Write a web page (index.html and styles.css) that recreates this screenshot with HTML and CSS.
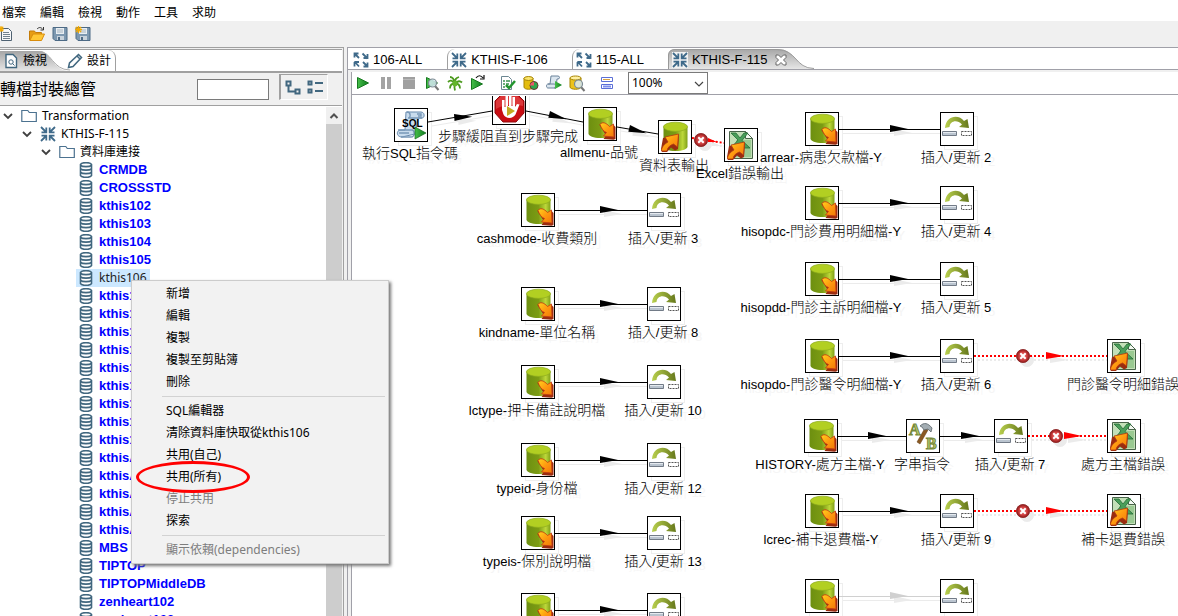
FILE: index.html
```html
<!DOCTYPE html>
<html lang="zh-Hant">
<head>
<meta charset="utf-8">
<title>KTHIS-F-115</title>
<link rel="stylesheet" href="styles.css">
</head>
<body>
<svg class="defs" aria-hidden="true">
  <defs>
    <linearGradient id="g-cyl" x1="0" x2="1" y1="0" y2="0"><stop offset="0" stop-color="#6d8f10"/><stop offset=".5" stop-color="#7c9c14"/><stop offset=".8" stop-color="#bdd83a"/><stop offset="1" stop-color="#7f9f18"/></linearGradient>
    <linearGradient id="g-arrow" x1="0" x2="1" y1="0" y2="1"><stop offset="0" stop-color="#ffd21c"/><stop offset=".5" stop-color="#ff9a10"/><stop offset="1" stop-color="#f07808"/></linearGradient>
    <linearGradient id="g-arc" x1="0" x2="1"><stop offset="0" stop-color="#b9d04e"/><stop offset="1" stop-color="#66781c"/></linearGradient>
    <linearGradient id="g-tab" x1="0" x2="0" y1="0" y2="1"><stop offset="0" stop-color="#a6a6a6"/><stop offset="1" stop-color="#e6e6e6"/></linearGradient>
    <linearGradient id="g-play" x1="0" x2="1"><stop offset="0" stop-color="#47c04a"/><stop offset="1" stop-color="#0d7a1c"/></linearGradient>
    <radialGradient id="g-err"><stop offset="0" stop-color="#e88"/><stop offset=".6" stop-color="#cf3d3d"/><stop offset="1" stop-color="#8c1c1c"/></radialGradient>
    <symbol id="cyl" viewBox="0 0 32 32"><path d="M4.500 5.500v20c0 2.500 5 4.500 12 4.500s12-2 12-4.500v-20z" fill="url(#g-cyl)"/><ellipse cx="16.500" cy="5.800" rx="12" ry="4.600" fill="#b2cf22" stroke="#8caa1c" stroke-width=".7"/></symbol>
    <symbol id="n-dbout" viewBox="0 0 32 32"><use href="#cyl" width="32" height="32"/><path d="M15.500 17c3-4 6-2 10 2l4-2 2 2v12l-2 .8-10-.8 2.500-3.500z" fill="#9a2c10"/><path d="M16 16.500c2-3 6-2 9.500 2l4-2.500.5 13-10.500-1 3-3.500c-3-1-5-4-6.500-8z" fill="url(#g-arrow)" stroke="#c33a10" stroke-width=".8"/></symbol>
    <symbol id="a-up" viewBox="0 0 32 32"><path d="M4 17l16-3-1 14-3 1.500-4-3L8 31H3l-1-3z" fill="#9a2c10"/><path d="M6 16l13.500-3-1 13-4-3c-3 1-6 3-6.500 7H2.500c0-4 3-7 6.500-9z" fill="url(#g-arrow)" stroke="#b23a10" stroke-width=".8"/></symbol>
    <symbol id="n-dbin" viewBox="0 0 32 32"><use href="#cyl" width="32" height="32"/><use href="#a-up" width="32" height="32"/></symbol>
    <symbol id="n-excel" viewBox="0 0 32 32"><path d="M4.500 2.500h16l7 7v20h-23z" fill="#c3e0b8" stroke="#49644a"/><path d="M11 11h15v17H11z" fill="#9aca92"/><path d="M20.500 2.500v7h7z" fill="#f4faf2" stroke="#49644a"/><path d="M6 4h5l4 5 4-5h4l-6 7.500 8 7.500h-6l-4-4-4 4H6l7-8z" fill="#4a9f5a" stroke="#246c36" stroke-width=".8"/><use href="#a-up" width="32" height="32"/></symbol>
    <symbol id="n-update" viewBox="0 0 32 32"><path d="M4 15C5 2 18 1 23 8l3.500-2L28 15l-10-1 3-2.500C16 6 9 8 8.500 14z" fill="url(#g-arc)"/><path d="M1.500 18.500h14v4h-14z" fill="#bac4cf" stroke="#727b87"/><path d="M2 19.500h13" stroke="#e5eaf0"/><path d="M20.500 18.500h10v4h-10z" fill="none" stroke="#555" stroke-dasharray="2 1"/></symbol>
    <symbol id="n-sql" viewBox="0 0 32 32"><path d="M11 3h15c4 0 4 6 1 6h-4l-3 16-13 3C1 28 1 21 6 21h4z" fill="#c9dced" stroke="#6789ad"/><path d="M12 3c4 0 4 6 1 6h14M3 21h14c3 0 3 7-1 7H6M22 5h4v2h-3M4 24h10" fill="none" stroke="#7898b8" stroke-width="1.400"/><text x="7" y="18" class="sql-mark">SQL</text><path d="M20 18l11 6-11 6z" fill="url(#g-play)" stroke="#176a21" stroke-width=".7"/></symbol>
    <symbol id="n-block" viewBox="0 0 32 32"><path d="M10 1h13l8 8v12l-8 9H10l-8-9V9z" fill="#c90d13" stroke="#8e0a0e"/><path d="M10 2h12l8 7v5c-8-2-18-2-27 3V9z" fill="#ea5454" opacity=".6"/><path d="M9 18V8h2.500v7h1V4H15v10h1V3h2.500v11h1V5H22v10l2-3 2.500.5-4 10c-3 5-10 4-12 0z" fill="#fff"/><path d="M14 14l8 5-8 5z" fill="#c4aa20"/></symbol>
    <symbol id="n-string" viewBox="0 0 32 32"><text x="2" y="15" class="letter-mark">A</text><text x="19" y="29" class="letter-mark">B</text><path d="M18 8l3 2-8 14-3-2z" fill="#8b5a22" stroke="#5f3a12" stroke-width=".5"/><path d="M13 6c4-4 8-3 12 2l-1 4-3-3-4 1-2-3z" fill="#a3adb3" stroke="#5a656b" stroke-width=".8"/></symbol>
    <symbol id="head" viewBox="0 0 18 8" overflow="visible"><path d="M0 0l18 4L0 7z" fill="currentColor"/></symbol>
    <symbol id="err" viewBox="0 0 14 14"><circle cx="7" cy="7" r="6.600" fill="url(#g-err)" stroke="#8a2020" stroke-width=".8"/><path d="M4.300 4.300l5.400 5.400m0-5.400L4.300 9.700" stroke="#fff" stroke-width="2"/></symbol>
    <symbol id="i-in" viewBox="0 0 16 16"><path d="M1 1l4.500 4.500M15 1l-4.500 4.500M1 15l4.500-4.500M15 15l-4.500-4.500M6.300 1.500v4.800H1.500M9.700 1.500v4.800h4.800M6.300 14.500V9.700H1.500M9.700 14.500V9.700h4.800" fill="none" stroke="#3f6a8a" stroke-width="1.800"/></symbol>
    <symbol id="i-out" viewBox="0 0 16 16"><path d="M1.500 1.500L6 6M14.500 6.500L9.500 1.500M1.500 9.500l4.500 5M14.500 14.500L10 10M1.500 5.500v-4h4M10.500 6h4V2M1.500 14.500v-4.500M6 10H1.500M14.500 10.500v4h-4" fill="none" stroke="#3f6a8a" stroke-width="1.800"/></symbol>
    <symbol id="i-folder" viewBox="0 0 16 16"><path d="M.8 13.500v-11h6l1.500 2h7v9z" fill="#fff" stroke="#4c7290" stroke-width="1.200"/></symbol>
    <symbol id="i-db" viewBox="0 0 16 16"><path d="M2.500 2.500C4 0 12 0 13.500 2.500v11c-1.500 2.500-9.500 2.500-11 0z" fill="#fff" stroke="#41677f" stroke-width="1.600"/><path d="M2.500 3.500c2 1.500 9 1.500 11 0M2.500 7c2 1.500 9 1.500 11 0M2.500 10.500c2 1.500 9 1.500 11 0" fill="none" stroke="#41677f" stroke-width="1.600"/></symbol>
    <symbol id="i-down" viewBox="0 0 16 16"><path d="M4 6l4 4 4-4" fill="none" stroke="#404040" stroke-width="1.800"/></symbol>
    <symbol id="i-play" viewBox="0 0 16 16"><path d="M2.500 2.500l11 5.500-11 5.500z" fill="url(#g-play)" stroke="#16791f"/></symbol>
    <symbol id="i-lens" viewBox="0 0 16 16"><path d="M11 11l3.500 4" stroke="#777" stroke-width="2"/><circle cx="8.500" cy="8" r="4" fill="#d8ebf4" fill-opacity=".85" stroke="#7d8b92" stroke-width="1.200"/></symbol>
    <symbol id="i-save" viewBox="0 0 16 16"><path d="M1 1.500h14v13H3l-2-2z" fill="#7d98b0" stroke="#4d6a85"/><path d="M4 2h8v6H4z" fill="#e9eef2"/><path d="M5 4h6M5 6h6" stroke="#a6b4c0"/><path d="M5 10h7v4H5z" fill="#c9d3dc"/><path d="M6 11h2v3H6z" fill="#4d6a85"/></symbol>
    <symbol id="i-star" viewBox="0 0 8 8"><path d="M4 0v8M0 4h8M1 1l6 6M7 1L1 7" stroke="#f2a900" stroke-width="1.500"/></symbol>
  </defs>
</svg>

<nav class="menubar" aria-label="主選單">
  <button>檔案</button><button>編輯</button><button>檢視</button><button>動作</button><button>工具</button><button>求助</button>
</nav>
<div class="filebar">
  <button aria-label="新增"><svg class="ico"><path d="M3.500 2.500h7l3 3v9h-10z" fill="#f6f8fa" stroke="#4f6272"/><path d="M5 6.500h6M5 8.500h7M5 10.500h7M5 12.500h7" stroke="#71818e"/><use href="#i-star" width="6" height="6"/></svg></button>
  <button class="open" aria-label="開啟"><svg class="ico"><path d="M.5 14V5h5l1 1.500h6V9" fill="#e79d13" stroke="#c47c08"/><path d="M.8 14.500L4 8h11.500l-3 6.500z" fill="#ffc734" stroke="#d98c0c"/><path d="M8 3c2-2 4-2 6 .5M14.500 1v3h-3" fill="none" stroke="#333"/></svg></button>
  <button aria-label="儲存"><svg class="ico"><use href="#i-save" width="16" height="16"/></svg></button>
  <button aria-label="另存"><svg class="ico"><use href="#i-save" width="16" height="16"/><use href="#i-star" width="7" height="7"/></svg></button>
</div>

<main class="work">
  <section class="side">
    <div class="side-tabs">
      <button class="side-tab side-tab-on"><svg class="side-shape" viewBox="0 0 72 20" preserveAspectRatio="none"><path d="M0 0h38c14 0 14 20 32 20H0z" fill="url(#g-tab)"/><path d="M38 0c14 0 14 19 32 19" fill="none" stroke="#aaa"/></svg><svg class="ico"><path d="M3 1.500h7l3.500 3.500v9.500H3z" fill="#fff" stroke="#41677f" stroke-width="1.400"/><circle cx="8" cy="9" r="2.200" fill="none" stroke="#41677f"/><path d="M9.500 10.500l2 2" stroke="#41677f"/></svg><span>檢視</span></button>
      <button class="side-tab side-tab-design"><svg class="ico"><path d="M1.500 14.500l1-4.500 9-8.500 3 3-8.500 9z M10 3l3 3" fill="#fff" stroke="#41677f" stroke-width="1.500"/></svg><span>設計</span></button>
    </div>
    <div class="side-head">
      <label for="find">轉檔封裝總管</label>
      <input id="find" type="text">
      <div class="toggles">
        <button aria-label="展開"><svg class="ico"><path d="M1.500 1.500h4v4h-4zM10.500 9.500h4v4h-4zM3.500 6v5.500H10" fill="none" stroke="#41677f" stroke-width="2"/></svg></button>
        <button aria-label="摺疊"><svg class="ico"><path d="M1.500 1.500h3v3h-3zM1.500 9.500h3v3h-3zM8 3h8M8 11h8" fill="none" stroke="#41677f" stroke-width="2"/></svg></button>
      </div>
    </div>
    <div class="tree-box">
      <ul class="tree">
        <li><svg class="twist"><use href="#i-down"/></svg><svg class="ico"><use href="#i-folder"/></svg><span>Transformation</span></li>
        <li class="l1"><svg class="twist"><use href="#i-down"/></svg><svg class="ico"><use href="#i-in"/></svg><span>KTHIS-F-115</span></li>
        <li class="l2"><svg class="twist"><use href="#i-down"/></svg><svg class="ico"><use href="#i-folder"/></svg><span>資料庫連接</span></li>
        <li class="db"><svg class="ico"><use href="#i-db"/></svg><span>CRMDB</span></li>
        <li class="db"><svg class="ico"><use href="#i-db"/></svg><span>CROSSSTD</span></li>
        <li class="db"><svg class="ico"><use href="#i-db"/></svg><span>kthis102</span></li>
        <li class="db"><svg class="ico"><use href="#i-db"/></svg><span>kthis103</span></li>
        <li class="db"><svg class="ico"><use href="#i-db"/></svg><span>kthis104</span></li>
        <li class="db"><svg class="ico"><use href="#i-db"/></svg><span>kthis105</span></li>
        <li class="db sel"><svg class="ico"><use href="#i-db"/></svg><span>kthis106</span></li>
        <li class="db"><svg class="ico"><use href="#i-db"/></svg><span>kthis1</span></li>
        <li class="db"><svg class="ico"><use href="#i-db"/></svg><span>kthis1</span></li>
        <li class="db"><svg class="ico"><use href="#i-db"/></svg><span>kthis1</span></li>
        <li class="db"><svg class="ico"><use href="#i-db"/></svg><span>kthis1</span></li>
        <li class="db"><svg class="ico"><use href="#i-db"/></svg><span>kthis1</span></li>
        <li class="db"><svg class="ico"><use href="#i-db"/></svg><span>kthis1</span></li>
        <li class="db"><svg class="ico"><use href="#i-db"/></svg><span>kthis1</span></li>
        <li class="db"><svg class="ico"><use href="#i-db"/></svg><span>kthis1</span></li>
        <li class="db"><svg class="ico"><use href="#i-db"/></svg><span>kthis1</span></li>
        <li class="db"><svg class="ico"><use href="#i-db"/></svg><span>kthisA</span></li>
        <li class="db"><svg class="ico"><use href="#i-db"/></svg><span>kthisA</span></li>
        <li class="db"><svg class="ico"><use href="#i-db"/></svg><span>kthisA</span></li>
        <li class="db"><svg class="ico"><use href="#i-db"/></svg><span>kthisA</span></li>
        <li class="db"><svg class="ico"><use href="#i-db"/></svg><span>kthisA</span></li>
        <li class="db"><svg class="ico"><use href="#i-db"/></svg><span>MBS</span></li>
        <li class="db"><svg class="ico"><use href="#i-db"/></svg><span>TIPTOP</span></li>
        <li class="db"><svg class="ico"><use href="#i-db"/></svg><span>TIPTOPMiddleDB</span></li>
        <li class="db"><svg class="ico"><use href="#i-db"/></svg><span>zenheart102</span></li>
        <li class="db"><svg class="ico"><use href="#i-db"/></svg><span>zenheart103</span></li>
      </ul>
      <div class="scroll"><button aria-label="向上捲動"><svg class="ico"><path d="M4.500 10L8 6.500l3.500 3.500" fill="none" stroke="#505050" stroke-width="2"/></svg></button><div class="thumb"></div></div>
    </div>
  </section>

  <section class="editor">
    <div class="tabs">
      <button class="tab"><svg class="ico"><use href="#i-out"/></svg><span>106-ALL</span></button>
      <button class="tab tab-edge"><svg class="ico"><use href="#i-in"/></svg><span>KTHIS-F-106</span></button>
      <button class="tab tab-edge"><svg class="ico"><use href="#i-out"/></svg><span>115-ALL</span></button>
      <button class="tab tab-on"><svg class="tab-shape" viewBox="0 0 146 20" preserveAspectRatio="none"><path d="M0 20V6Q1 0 7 0h102c20 0 18 20 37 20z" fill="url(#g-tab)"/><path d="M.5 20V6Q1 .5 7 .5h102c20 0 18 19 37 19" fill="none" stroke="#999"/></svg><svg class="ico"><path d="M0 0h16v16H0z" fill="#f2f2f2"/><use href="#i-in"/></svg><span>KTHIS-F-115</span><svg class="close" viewBox="0 0 12 12"><path d="M1 1h2.500L6 3.500 8.500 1H11v2.500L8.500 6 11 8.500V11H8.500L6 8.500 3.500 11H1V8.500L3.500 6 1 3.500z" fill="#fff" stroke="#666"/></svg></button>
    </div>
    <div class="pane">
      <div class="runbar">
        <button aria-label="執行"><svg class="ico"><use href="#i-play"/></svg></button>
        <button aria-label="暫停"><svg class="ico"><path d="M3 2h4v12H3zM9 2h4v12H9z" fill="#a3a3a3"/></svg></button>
        <button aria-label="停止"><svg class="ico"><path d="M2 2h12v12H2z" fill="#a0a0a0"/><path d="M2 4.500h12" stroke="#b8b8b8"/></svg></button>
        <button aria-label="預覽"><svg class="ico"><use href="#i-play"/><use href="#i-lens"/></svg></button>
        <button aria-label="除錯"><svg class="ico"><path d="M8 8.500C5 5 3 5 1 7M8 8.500c-4 0-5 2-5 5M8 8.500c-1 3-1 4 0 7M8 8.500c3 0 5 2 5 5M8 8.500c3-3 5-3 7-1M8 8C7 4 5 2 3 2M8 8c0-4 1-5 4-6" fill="none" stroke="#4c9a1e" stroke-width="1.800"/><ellipse cx="8" cy="8.500" rx="2.500" ry="3" fill="#63b52b"/></svg></button>
        <button aria-label="重播"><svg class="ico"><path d="M1.500 3.500l11 5.500-11 5.500z" fill="url(#g-play)" stroke="#16791f"/><path d="M6 3c2-3 5-3 7 0M14 0v4h-4" fill="none" stroke="#111" stroke-width="1.200"/></svg></button>
        <i class="space"></i>
        <button aria-label="檢驗"><svg class="ico"><path d="M1.500 1.500h7l3 3v10h-10z" fill="#fff" stroke="#6c8792"/><path d="M3 6h2M6 6h4M3 9h2M6 9h3M3 12h2" stroke="#3c9150" stroke-width="1.500"/><path d="M6 10l3 3 6-7" fill="none" stroke="#23952f" stroke-width="2.500"/></svg></button>
        <button aria-label="影響分析"><svg class="ico"><path d="M1 3v9c0 3 9 3 9 0V3z" fill="#e4bd10" stroke="#a78400"/><ellipse cx="5.500" cy="3.500" rx="4.500" ry="2" fill="#fbe56b" stroke="#a78400"/><circle cx="11" cy="10.500" r="4" fill="#2fa84a" stroke="#6b3030"/><path d="M11 10.500V7a4 4 0 0 0-4 3.500z" fill="#e56"/></svg></button>
        <button aria-label="SQL"><svg class="ico"><path d="M5 1h7c2 0 2 3 0 3h-1l-1 9H2c-2 0-2-4 0-4h2z" fill="#dbe6ef" stroke="#6a829a"/><path d="M2 9h6c2 0 2 4 0 4" fill="none" stroke="#6a829a"/><path d="M9 6l7 4-7 4z" fill="url(#g-play)"/></svg></button>
        <button aria-label="探索資料庫"><svg class="ico"><path d="M1 3v9c0 3 11 3 11 0V3z" fill="#edc31b" stroke="#a78400"/><ellipse cx="6.500" cy="3" rx="5.500" ry="2" fill="#fff0a0" stroke="#a78400"/><use href="#i-lens" x="1" y="1"/></svg></button>
        <i class="space"></i>
        <button aria-label="顯示結果"><svg class="ico"><path d="M2.500 2.500h11v4h-11zM2.500 9.500h11v4h-11z" fill="#fff" stroke="#5b6fd6"/><path d="M4 4.500h7" stroke="#d8a040"/><path d="M4 11.500h8" stroke="#7f90ee" stroke-width="2"/></svg></button>
        <span class="zoom"><select aria-label="縮放"><option>100%</option></select><svg viewBox="0 0 16 16"><path d="M4 6l4 4 4-4" fill="none" stroke="#444" stroke-width="1.200"/></svg></span>
      </div>
      <div class="canvas">
        <svg class="links">
          <g class="hop">
            <path d="M76 26L140 15M174 15L231 26M265 31L306 38"/>
            <path d="M203 114.500h92M203 208.500h92M203 286.500h92M203 364.500h92M203 437.500h92M203 514.500h92"/>
            <path d="M487 33.500h101M487 107.500h101M487 183.500h101M487 260.500h101M486 340.500h68M588 340.500h54M487 415.500h101"/>
            <g transform="translate(102 18) rotate(-4)"><use href="#head" width="18" height="8"/></g>
            <g transform="translate(198 15) rotate(14)"><use href="#head" width="18" height="8"/></g>
            <g transform="translate(278 29) rotate(14)"><use href="#head" width="18" height="8"/></g>
            <use href="#head" x="248" y="110" width="18" height="8"/><use href="#head" x="248" y="204" width="18" height="8"/><use href="#head" x="248" y="282" width="18" height="8"/><use href="#head" x="248" y="360" width="18" height="8"/><use href="#head" x="248" y="433" width="18" height="8"/><use href="#head" x="248" y="510" width="18" height="8"/>
            <use href="#head" x="538" y="29" width="18" height="8"/><use href="#head" x="538" y="103" width="18" height="8"/><use href="#head" x="538" y="179" width="18" height="8"/><use href="#head" x="538" y="256" width="18" height="8"/><use href="#head" x="516" y="336" width="18" height="8"/><use href="#head" x="609" y="336" width="18" height="8"/><use href="#head" x="538" y="411" width="18" height="8"/>
          </g>
          <g class="hop hop-off"><path d="M487 500.500h101"/><use href="#head" x="538" y="496" width="18" height="8"/></g>
          <g class="hop hop-err">
            <path d="M340 42L372 47M622 260h133M676 340h79M622 415h133"/>
            <path class="tip" d="M356 42l9 4-9 0z"/>
            <use href="#head" x="694" y="256" width="18" height="8"/><use href="#head" x="712" y="336" width="18" height="8"/><use href="#head" x="694" y="411" width="18" height="8"/>
            <use href="#err" x="342" y="37" width="14" height="14"/><use href="#err" x="664" y="253" width="14" height="14"/><use href="#err" x="697" y="333" width="14" height="14"/><use href="#err" x="664" y="408" width="14" height="14"/>
          </g>
        </svg>
        <div class="node" style="left:42px;top:12px"><svg><use href="#n-sql"/></svg><p>執行<b>SQL</b>指令碼</p></div>
        <div class="node" style="left:140px;top:-5px"><svg><use href="#n-block"/></svg><p>步驟緩阻直到步驟完成</p></div>
        <div class="node" style="left:231px;top:11px"><svg><use href="#n-dbout"/></svg><p><b>allmenu-</b>品號</p></div>
        <div class="node" style="left:306px;top:24px"><svg><use href="#n-dbin"/></svg><p>資料表輸出</p></div>
        <div class="node" style="left:372px;top:32px"><svg><use href="#n-excel"/></svg><p><b>Excel</b>錯誤輸出</p></div>
        <div class="node" style="left:453px;top:16px"><svg><use href="#n-dbout"/></svg><p><b>arrear-</b>病患欠款檔<b>-Y</b></p></div>
        <div class="node" style="left:588px;top:16px"><svg><use href="#n-update"/></svg><p>插入<b>/</b>更新<b> 2</b></p></div>
        <div class="node" style="left:453px;top:90px"><svg><use href="#n-dbout"/></svg><p><b>hisopdc-</b>門診費用明細檔<b>-Y</b></p></div>
        <div class="node" style="left:588px;top:90px"><svg><use href="#n-update"/></svg><p>插入<b>/</b>更新<b> 4</b></p></div>
        <div class="node" style="left:453px;top:166px"><svg><use href="#n-dbout"/></svg><p><b>hisopdd-</b>門診主訴明細檔<b>-Y</b></p></div>
        <div class="node" style="left:588px;top:166px"><svg><use href="#n-update"/></svg><p>插入<b>/</b>更新<b> 5</b></p></div>
        <div class="node" style="left:453px;top:243px"><svg><use href="#n-dbout"/></svg><p><b>hisopdo-</b>門診醫令明細檔<b>-Y</b></p></div>
        <div class="node" style="left:588px;top:243px"><svg><use href="#n-update"/></svg><p>插入<b>/</b>更新<b> 6</b></p></div>
        <div class="node" style="left:755px;top:243px"><svg><use href="#n-excel"/></svg><p>門診醫令明細錯誤</p></div>
        <div class="node" style="left:452px;top:323px"><svg><use href="#n-dbout"/></svg><p><b>HISTORY-</b>處方主檔<b>-Y</b></p></div>
        <div class="node" style="left:554px;top:323px"><svg><use href="#n-string"/></svg><p>字串指令</p></div>
        <div class="node" style="left:642px;top:323px"><svg><use href="#n-update"/></svg><p>插入<b>/</b>更新<b> 7</b></p></div>
        <div class="node" style="left:755px;top:323px"><svg><use href="#n-excel"/></svg><p>處方主檔錯誤</p></div>
        <div class="node" style="left:453px;top:398px"><svg><use href="#n-dbout"/></svg><p><b>lcrec-</b>補卡退費檔<b>-Y</b></p></div>
        <div class="node" style="left:588px;top:398px"><svg><use href="#n-update"/></svg><p>插入<b>/</b>更新<b> 9</b></p></div>
        <div class="node" style="left:755px;top:398px"><svg><use href="#n-excel"/></svg><p>補卡退費錯誤</p></div>
        <div class="node" style="left:453px;top:483px"><svg><use href="#n-dbout"/></svg></div>
        <div class="node" style="left:588px;top:483px"><svg><use href="#n-update"/></svg></div>
        <div class="node" style="left:169px;top:97px"><svg><use href="#n-dbout"/></svg><p><b>cashmode-</b>收費類別</p></div>
        <div class="node" style="left:295px;top:97px"><svg><use href="#n-update"/></svg><p>插入<b>/</b>更新<b> 3</b></p></div>
        <div class="node" style="left:169px;top:191px"><svg><use href="#n-dbout"/></svg><p><b>kindname-</b>單位名稱</p></div>
        <div class="node" style="left:295px;top:191px"><svg><use href="#n-update"/></svg><p>插入<b>/</b>更新<b> 8</b></p></div>
        <div class="node" style="left:169px;top:269px"><svg><use href="#n-dbout"/></svg><p><b>lctype-</b>押卡備註說明檔</p></div>
        <div class="node" style="left:295px;top:269px"><svg><use href="#n-update"/></svg><p>插入<b>/</b>更新<b> 10</b></p></div>
        <div class="node" style="left:169px;top:347px"><svg><use href="#n-dbout"/></svg><p><b>typeid-</b>身份檔</p></div>
        <div class="node" style="left:295px;top:347px"><svg><use href="#n-update"/></svg><p>插入<b>/</b>更新<b> 12</b></p></div>
        <div class="node" style="left:169px;top:420px"><svg><use href="#n-dbout"/></svg><p><b>typeis-</b>保別說明檔</p></div>
        <div class="node" style="left:295px;top:420px"><svg><use href="#n-update"/></svg><p>插入<b>/</b>更新<b> 13</b></p></div>
        <div class="node" style="left:169px;top:497px"><svg><use href="#n-dbout"/></svg></div>
        <div class="node" style="left:295px;top:497px"><svg><use href="#n-update"/></svg></div>
      </div>
    </div>
  </section>
</main>

<div class="popup" role="menu">
  <button role="menuitem">新增</button>
  <button role="menuitem">編輯</button>
  <button role="menuitem">複製</button>
  <button role="menuitem">複製至剪貼簿</button>
  <button role="menuitem">刪除</button>
  <hr>
  <button role="menuitem">SQL編輯器</button>
  <button role="menuitem">清除資料庫快取從kthis106</button>
  <button role="menuitem">共用(自己)</button>
  <button role="menuitem" class="marked">共用(所有)</button>
  <button role="menuitem" disabled>停止共用</button>
  <button role="menuitem">探索</button>
  <hr>
  <button role="menuitem" disabled>顯示依賴(dependencies)</button>
</div>
</body>
</html>
```
FILE: styles.css
```css
*, *::before, *::after { box-sizing: border-box; }
body {
  margin: 0;
  height: 100vh;
  display: flex;
  flex-direction: column;
  overflow: hidden;
  background: #f0f0f0;
  color: #000;
  font: 12px/18px "Noto Sans", "Noto Sans CJK TC", sans-serif;
}
button {
  display: flex;
  align-items: center;
  margin: 0;
  padding: 0;
  border: 0;
  background: none;
  color: inherit;
  font: inherit;
  white-space: nowrap;
}
svg { display: block; flex: none; }
.defs { position: absolute; width: 0; height: 0; }
.ico { width: 16px; height: 16px; overflow: visible; }
.sql-mark { font: bold 10px "Liberation Sans", sans-serif; }
.letter-mark { font: bold 16px "Liberation Serif", serif; fill: #b5c86a; stroke: #77893a; stroke-width: 1px; }

.menubar { display: flex; gap: 14px; height: 21px; padding: 4px 2px 0; background: #fff; flex: none; }
.filebar { display: flex; align-items: center; gap: 7px; height: 26px; flex: none; }
.filebar button:first-child { margin-left: -2px; }
.filebar .open { margin-left: 8px; }
.work { flex: 1; min-height: 0; display: flex; gap: 3px; }

/* Explorer panel */
.side {
  width: 344px;
  flex: none;
  display: flex;
  flex-direction: column;
  padding: 1px 1px 0 0;
  border-top: 1px solid #a0a0a0;
  border-right: 1px solid #a0a0a0;
}
.side-tabs { display: flex; height: 24px; border-top: 1px solid #a0a0a0; border-bottom: 2px solid #a0a0a0; background: #fff; flex: none; }
.side-tab { position: relative; gap: 4px; padding: 0 0 0 3px; }
.side-tab .ico, .side-tab span { position: relative; }
.side-tab-on { width: 67px; }
.side-shape { position: absolute; left: 0; top: 1px; width: 72px; height: 20px; }
.side-tab-design { width: 49px; padding-left: 0; border-right: 1px solid #a0a0a0; border-top-right-radius: 8px; }
.side-head { display: flex; align-items: center; height: 33px; border-bottom: 1px solid #a0a0a0; flex: none; }
.side-head label { width: 197px; font-size: 16px; }
.side-head input { width: 72px; height: 21px; border: 1px solid #7a7a7a; background: #fff; }
.toggles { display: flex; align-items: center; gap: 6px; height: 26px; margin: 0 0 4px 10px; padding: 2px 4px 0; border: 1px solid #a0a0a0; border-width: 1px 1px 1px 2px; border-right-color: #fff; border-bottom-color: #fff; }
.tree-box { flex: 1; min-height: 0; display: flex; background: #fff; overflow: hidden; padding-top: 1px; }
.tree { flex: 1; margin: 0; padding: 0; list-style: none; }
.tree li { display: flex; align-items: center; height: 18px; }
.tree span { margin-left: 5px; }
.twist { width: 16px; height: 16px; margin-right: 5px; }
.tree .l1 { padding-left: 19px; }
.tree .l2 { padding-left: 38px; }
.tree .db { width: max-content; margin-left: 76px; padding: 0 3px 0 2px; color: #00f; font: bold 13px/18px "Liberation Sans", sans-serif; }
.tree .sel { background: #cce8ff; color: #222; font: 12px/18px "Noto Sans", sans-serif; }
.scroll { width: 16px; background: #f0f0f0; display: flex; flex-direction: column; }
.scroll button { height: 17px; }
.thumb { flex: 1; background: #cdcdcd; }

/* Editor */
.editor { flex: 1; min-width: 0; display: flex; flex-direction: column; border-top: 1px solid #a0a0a8; border-left: 1px solid #a0a0a8; }
.tabs { display: flex; height: 22px; padding-top: 1px; border-bottom: 1px solid #a0a0a8; background: #fff; font: 13px/18px "Liberation Sans", sans-serif; flex: none; }
.tab { position: relative; gap: 4px; padding: 2px 25px 0 5px; }
.tab-edge { border-left: 1px solid #a0a0a0; border-top-left-radius: 8px; padding: 2px 24px 0 3px; }
.tab-on { padding: 2px 0 0 4px; }
.tab-on .ico, .tab-on span, .close { position: relative; }
.tab-shape { position: absolute; left: 0; top: 0; width: 146px; height: 20px; }
.close { width: 12px; height: 12px; margin-left: 3px; }
.pane { flex: 1; min-height: 0; display: flex; flex-direction: column; margin: 2px 0 0 3px; border-left: 1px solid #a0a0a8; background: #fff; }
.runbar { display: flex; height: 23px; border-bottom: 1px solid #a0a0a8; flex: none; }
.runbar button { width: 23px; padding-right: 2px; justify-content: center; }
.space { width: 7px; }
.zoom { position: relative; width: 80px; margin-left: 9px; }
.zoom select { width: 100%; height: 100%; padding: 0 3px; appearance: none; border: 1px solid #7a7a7a; border-radius: 0; background: #fff; font: 12px/18px "Noto Sans", sans-serif; }
.zoom svg { position: absolute; right: 1px; top: 4px; width: 16px; height: 16px; pointer-events: none; }

/* Diagram */
.canvas { position: relative; z-index: 0; flex: 1; min-height: 0; margin-top: 1px; overflow: hidden; background: #fff; }
.links { position: absolute; inset: 0; width: 100%; height: 100%; }
.hop { color: #000; stroke-width: 1; filter: drop-shadow(4px 4px 0 rgba(0, 0, 0, .08)); }
.hop > path { stroke: currentColor; }
.hop-off { color: #d0d0d0; }
.hop-err { color: #f00; stroke-width: 2; }
.hop-err > path { stroke-dasharray: 2 2; }
.hop-err use, .hop-err .tip { stroke-width: 0; fill: #f00; }
.node { position: absolute; width: 34px; display: flex; flex-direction: column; align-items: center; }
.node::before { content: ""; position: absolute; z-index: -1; left: 4px; top: 4px; width: 34px; height: 34px; border: 1px solid #eee; }
.node > svg { width: 34px; height: 34px; border: 1px solid #000; background: #fff; }
.node p { margin: 1px 2px 0 0; font: 14px/18px "Noto Sans CJK TC", sans-serif; font-weight: 300; white-space: pre; text-shadow: 4px 4px 0 #f5f5f5; }
.node b { font: 13px/18px "Liberation Sans", sans-serif; }

/* Context menu */
.popup {
  position: absolute;
  left: 131px;
  top: 280px;
  width: 258px;
  padding: 2px;
  border: 1px solid #ccc;
  background: #f2f2f2;
  box-shadow: 2px 2px 3px #777;
}
.popup button { position: relative; width: 100%; height: 22px; padding-left: 32px; }
.popup button:disabled { color: #7d7d7d; }
.popup hr { height: 1px; margin: 3px 1px 3px 28px; border: 0; background: #d2d2d2; }
.marked::after { content: ""; position: absolute; z-index: 1; left: 2px; top: -5px; width: 114px; height: 32px; border: 3px solid #f00; border-radius: 50%; }
```
